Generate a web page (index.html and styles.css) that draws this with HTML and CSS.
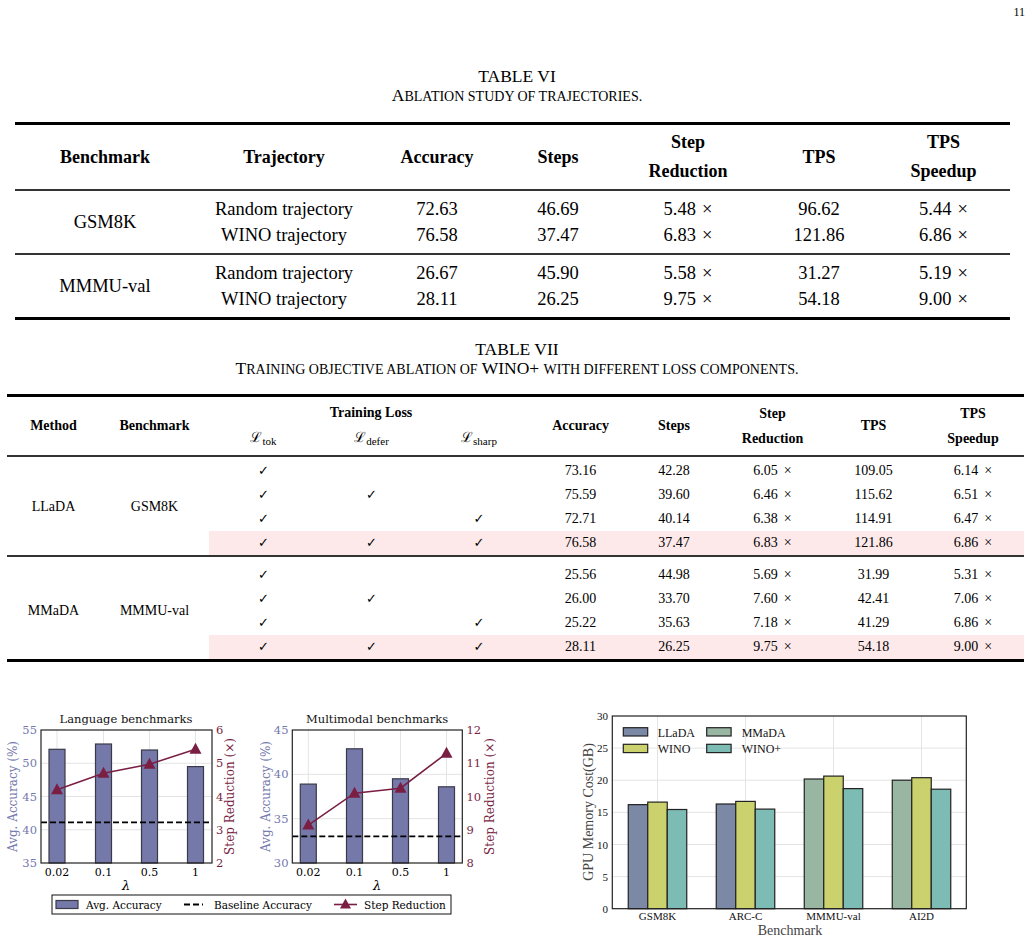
FILE: index.html
```html
<!DOCTYPE html>
<html lang="en">
<head>
<meta charset="utf-8"/>
<title>Ablation tables and figures</title>
<link rel="stylesheet" href="styles.css">
</head>
<body>
<div class="page-num">11</div>

<div class="caption cap6">
  <div class="cap-title">TABLE VI</div>
  <div class="cap-sub">A<span class="sc">BLATION STUDY OF TRAJECTORIES.</span></div>
</div>
<table class="t6">
  <colgroup>
    <col style="width:180px"><col style="width:178px"><col style="width:128px"><col style="width:114px"><col style="width:146px"><col style="width:116px"><col style="width:133px">
  </colgroup>
  <thead>
    <tr>
      <th>Benchmark</th><th>Trajectory</th><th>Accuracy</th><th>Steps</th><th>Step<br>Reduction</th><th>TPS</th><th>TPS<br>Speedup</th>
    </tr>
  </thead>
  <tbody class="grp">
    <tr class="first"><td rowspan="2">GSM8K</td><td>Random trajectory</td><td>72.63</td><td>46.69</td><td>5.48<span class="x">×</span></td><td>96.62</td><td>5.44<span class="x">×</span></td></tr>
    <tr class="last"><td>WINO trajectory</td><td>76.58</td><td>37.47</td><td>6.83<span class="x">×</span></td><td>121.86</td><td>6.86<span class="x">×</span></td></tr>
  </tbody>
  <tbody class="grp">
    <tr class="first"><td rowspan="2">MMMU-val</td><td>Random trajectory</td><td>26.67</td><td>45.90</td><td>5.58<span class="x">×</span></td><td>31.27</td><td>5.19<span class="x">×</span></td></tr>
    <tr class="last"><td>WINO trajectory</td><td>28.11</td><td>26.25</td><td>9.75<span class="x">×</span></td><td>54.18</td><td>9.00<span class="x">×</span></td></tr>
  </tbody>
</table>

<div class="caption cap7">
  <div class="cap-title">TABLE VII</div>
  <div class="cap-sub">T<span class="sc">RAINING OBJECTIVE ABLATION OF</span> WINO+ <span class="sc">WITH DIFFERENT LOSS COMPONENTS.</span></div>
</div>
<table class="t7">
  <colgroup>
    <col style="width:93px"><col style="width:109px"><col style="width:109px"><col style="width:107px"><col style="width:108px"><col style="width:95px"><col style="width:92px"><col style="width:105px"><col style="width:97px"><col style="width:102px">
  </colgroup>
  <thead>
    <tr class="h1">
      <th rowspan="2">Method</th><th rowspan="2">Benchmark</th><th colspan="3">Training Loss</th><th rowspan="2">Accuracy</th><th rowspan="2">Steps</th><th rowspan="2">Step<br>Reduction</th><th rowspan="2">TPS</th><th rowspan="2">TPS<br>Speedup</th>
    </tr>
    <tr class="h2">
      <th class="loss">ℒ<sub>tok</sub></th><th class="loss">ℒ<sub>defer</sub></th><th class="loss">ℒ<sub>sharp</sub></th>
    </tr>
  </thead>
  <tbody class="grp g1">
    <tr class="first"><td rowspan="4">LLaDA</td><td rowspan="4">GSM8K</td><td class="ck">✓</td><td></td><td></td><td>73.16</td><td>42.28</td><td>6.05<span class="x">×</span></td><td>109.05</td><td>6.14<span class="x">×</span></td></tr>
    <tr><td class="ck">✓</td><td class="ck">✓</td><td></td><td>75.59</td><td>39.60</td><td>6.46<span class="x">×</span></td><td>115.62</td><td>6.51<span class="x">×</span></td></tr>
    <tr><td class="ck">✓</td><td></td><td class="ck">✓</td><td>72.71</td><td>40.14</td><td>6.38<span class="x">×</span></td><td>114.91</td><td>6.47<span class="x">×</span></td></tr>
    <tr class="hl"><td class="ck">✓</td><td class="ck">✓</td><td class="ck">✓</td><td>76.58</td><td>37.47</td><td>6.83<span class="x">×</span></td><td>121.86</td><td>6.86<span class="x">×</span></td></tr>
  </tbody>
  <tbody class="grp g2">
    <tr class="first"><td rowspan="4">MMaDA</td><td rowspan="4">MMMU-val</td><td class="ck">✓</td><td></td><td></td><td>25.56</td><td>44.98</td><td>5.69<span class="x">×</span></td><td>31.99</td><td>5.31<span class="x">×</span></td></tr>
    <tr><td class="ck">✓</td><td class="ck">✓</td><td></td><td>26.00</td><td>33.70</td><td>7.60<span class="x">×</span></td><td>42.41</td><td>7.06<span class="x">×</span></td></tr>
    <tr><td class="ck">✓</td><td></td><td class="ck">✓</td><td>25.22</td><td>35.63</td><td>7.18<span class="x">×</span></td><td>41.29</td><td>6.86<span class="x">×</span></td></tr>
    <tr class="hl"><td class="ck">✓</td><td class="ck">✓</td><td class="ck">✓</td><td>28.11</td><td>26.25</td><td>9.75<span class="x">×</span></td><td>54.18</td><td>9.00<span class="x">×</span></td></tr>
  </tbody>
</table>

<div class="figures">
  <svg class="fig-left" width="500" height="230" viewBox="0 0 500 230">
    <!-- language benchmarks -->
    <text class="ttl" x="126" y="24" text-anchor="middle">Language benchmarks</text>
    <g class="grid">
      <line x1="41" y1="64.25" x2="212" y2="64.25"/><line x1="41" y1="97.5" x2="212" y2="97.5"/><line x1="41" y1="130.75" x2="212" y2="130.75"/>
      <line x1="57" y1="31" x2="57" y2="164"/><line x1="103.5" y1="31" x2="103.5" y2="164"/><line x1="149.5" y1="31" x2="149.5" y2="164"/><line x1="195.5" y1="31" x2="195.5" y2="164"/>
    </g>
    <g class="bar">
      <rect x="49" y="50.3" width="16" height="113.7"/>
      <rect x="95.5" y="45" width="16" height="119"/>
      <rect x="141.5" y="51" width="16" height="113"/>
      <rect x="187.5" y="67.6" width="16" height="96.4"/>
    </g>
    <line class="base" x1="41" y1="123.4" x2="212" y2="123.4"/>
    <polyline class="step" points="57,90.85 103.5,74.2 149.5,65.2 195.5,50.2"/>
    <g class="tri">
      <polygon points="57,84.35 51,95.35 63,95.35"/>
      <polygon points="103.5,67.7 97.5,78.7 109.5,78.7"/>
      <polygon points="149.5,58.7 143.5,69.7 155.5,69.7"/>
      <polygon points="195.5,43.7 189.5,54.7 201.5,54.7"/>
    </g>
    <rect class="frame" x="41" y="31" width="171" height="133"/>
    <g class="yl-tick" text-anchor="end">
      <text x="37" y="35">55</text><text x="37" y="68.25">50</text><text x="37" y="101.5">45</text><text x="37" y="134.75">40</text><text x="37" y="168">35</text>
    </g>
    <g class="yr-tick">
      <text x="216" y="35">6</text><text x="216" y="68.25">5</text><text x="216" y="101.5">4</text><text x="216" y="134.75">3</text><text x="216" y="168">2</text>
    </g>
    <g class="x-tick" text-anchor="middle">
      <text x="57" y="177">0.02</text><text x="103.5" y="177">0.1</text><text x="149.5" y="177">0.5</text><text x="195.5" y="177">1</text>
    </g>
    <text class="lam" x="126" y="191" text-anchor="middle">λ</text>
    <text class="yl-lab" transform="translate(17,97.5) rotate(-90)" text-anchor="middle">Avg. Accuracy (%)</text>
    <text class="yr-lab" transform="translate(234,97.5) rotate(-90)" text-anchor="middle">Step Reduction (×)</text>

    <!-- multimodal benchmarks -->
    <text class="ttl" x="377" y="24" text-anchor="middle">Multimodal benchmarks</text>
    <g class="grid">
      <line x1="292.3" y1="75.33" x2="462.3" y2="75.33"/><line x1="292.3" y1="119.67" x2="462.3" y2="119.67"/>
      <line x1="308.3" y1="31" x2="308.3" y2="164"/><line x1="354.5" y1="31" x2="354.5" y2="164"/><line x1="400.5" y1="31" x2="400.5" y2="164"/><line x1="446.5" y1="31" x2="446.5" y2="164"/>
    </g>
    <g class="bar">
      <rect x="300.3" y="85.1" width="16" height="78.9"/>
      <rect x="346.5" y="49.8" width="16" height="114.2"/>
      <rect x="392.5" y="79.8" width="16" height="84.2"/>
      <rect x="438.5" y="87.8" width="16" height="76.2"/>
    </g>
    <line class="base" x1="292.3" y1="137.4" x2="462.3" y2="137.4"/>
    <polyline class="step" points="308.3,126.1 354.5,94.2 400.5,89.2 446.5,54.3"/>
    <g class="tri">
      <polygon points="308.3,119.6 302.3,130.6 314.3,130.6"/>
      <polygon points="354.5,87.7 348.5,98.7 360.5,98.7"/>
      <polygon points="400.5,82.7 394.5,93.7 406.5,93.7"/>
      <polygon points="446.5,47.8 440.5,58.8 452.5,58.8"/>
    </g>
    <rect class="frame" x="292.3" y="31" width="170" height="133"/>
    <g class="yl-tick" text-anchor="end">
      <text x="288.5" y="35">45</text><text x="288.5" y="79.33">40</text><text x="288.5" y="123.67">35</text><text x="288.5" y="168">30</text>
    </g>
    <g class="yr-tick">
      <text x="466.5" y="35">12</text><text x="466.5" y="68.25">11</text><text x="466.5" y="101.5">10</text><text x="466.5" y="134.75">9</text><text x="466.5" y="168">8</text>
    </g>
    <g class="x-tick" text-anchor="middle">
      <text x="308.3" y="177">0.02</text><text x="354.5" y="177">0.1</text><text x="400.5" y="177">0.5</text><text x="446.5" y="177">1</text>
    </g>
    <text class="lam" x="377" y="191" text-anchor="middle">λ</text>
    <text class="yl-lab" transform="translate(270,97.5) rotate(-90)" text-anchor="middle">Avg. Accuracy (%)</text>
    <text class="yr-lab" transform="translate(494,97.5) rotate(-90)" text-anchor="middle">Step Reduction (×)</text>

    <!-- shared legend -->
    <rect class="leg-box" x="52" y="196" width="399" height="19"/>
    <rect class="bar" x="56" y="201.5" width="22" height="8"/>
    <text class="leg" x="86" y="209.5">Avg. Accuracy</text>
    <line class="base" x1="184" y1="205.5" x2="203" y2="205.5"/>
    <text class="leg" x="214" y="209.5">Baseline Accuracy</text>
    <line class="step" x1="334" y1="205.5" x2="357" y2="205.5"/>
    <polygon class="tri" points="345.5,199.5 340,209.5 351,209.5"/>
    <text class="leg" x="364" y="209.5">Step Reduction</text>
  </svg>

  <svg class="fig-right" width="430" height="240" viewBox="0 -2 430 240">
    <g class="grid">
      <line x1="52.3" y1="47.1" x2="406.3" y2="47.1"/><line x1="52.3" y1="79.2" x2="406.3" y2="79.2"/><line x1="52.3" y1="111.35" x2="406.3" y2="111.35"/><line x1="52.3" y1="143.5" x2="406.3" y2="143.5"/><line x1="52.3" y1="175.6" x2="406.3" y2="175.6"/>
      <line x1="97.5" y1="15" x2="97.5" y2="207.7"/><line x1="185.5" y1="15" x2="185.5" y2="207.7"/><line x1="273.5" y1="15" x2="273.5" y2="207.7"/><line x1="361.5" y1="15" x2="361.5" y2="207.7"/>
    </g>
    <g class="mbar">
      <rect class="llada" x="68.25" y="103.65" width="19.5" height="104.05"/>
      <rect class="wino" x="87.75" y="101.1" width="19.5" height="106.6"/>
      <rect class="winop" x="107.25" y="108.5" width="19.5" height="99.2"/>
      <rect class="llada" x="156.25" y="103" width="19.5" height="104.7"/>
      <rect class="wino" x="175.75" y="100.4" width="19.5" height="107.3"/>
      <rect class="winop" x="195.25" y="108.1" width="19.5" height="99.6"/>
      <rect class="mmada" x="244.25" y="78" width="19.5" height="129.7"/>
      <rect class="wino" x="263.75" y="75.1" width="19.5" height="132.6"/>
      <rect class="winop" x="283.25" y="87.6" width="19.5" height="120.1"/>
      <rect class="mmada" x="332.25" y="79.2" width="19.5" height="128.5"/>
      <rect class="wino" x="351.75" y="76.7" width="19.5" height="131"/>
      <rect class="winop" x="371.25" y="88.2" width="19.5" height="119.5"/>
    </g>
    <rect class="frame" x="52.3" y="15" width="354" height="192.7"/>
    <g class="mtick" text-anchor="end">
      <text x="48" y="19">30</text><text x="48" y="51.1">25</text><text x="48" y="83.2">20</text><text x="48" y="115.35">15</text><text x="48" y="147.5">10</text><text x="48" y="179.6">5</text><text x="48" y="211.7">0</text>
    </g>
    <g class="mtick" text-anchor="middle">
      <text x="97.5" y="219">GSM8K</text><text x="185.5" y="219">ARC-C</text><text x="273.5" y="219">MMMU-val</text><text x="361.5" y="219">AI2D</text>
    </g>
    <text class="mlab" x="230" y="234" text-anchor="middle">Benchmark</text>
    <text class="mlab" transform="translate(33,111) rotate(-90)" text-anchor="middle">GPU Memory Cost(GB)</text>
    <g class="mbar">
      <rect class="llada" x="63.3" y="26.7" width="24.4" height="8.3"/>
      <rect class="mmada" x="146.7" y="26.7" width="24.4" height="8.3"/>
      <rect class="wino" x="63.3" y="43.3" width="24.4" height="8.3"/>
      <rect class="winop" x="146.7" y="43.3" width="24.4" height="8.3"/>
    </g>
    <g class="mleg">
      <text x="97.7" y="35.5">LLaDA</text><text x="181.7" y="35.5">MMaDA</text>
      <text x="97.7" y="52">WINO</text><text x="181.7" y="52">WINO+</text>
    </g>
  </svg>
</div>
</body>
</html>
```

FILE: styles.css
```css
body {
  margin: 0;
  background: #fff;
  color: #000;
  font-family: "Liberation Serif", "Times New Roman", serif;
  width: 1034px;
  height: 940px;
  overflow: hidden;
}

.page-num {
  text-align: right;
  padding: 5px 9px 0 0;
  font-size: 12px;
  line-height: 14px;
}

.caption {
  text-align: center;
  font-size: 17.5px;
  line-height: 19px;
}
.cap-sub .sc {
  font-size: 14px;
}
.cap6 {
  margin-top: 48px;
  margin-bottom: 16px;
}
.cap7 {
  margin-top: 20px;
  margin-bottom: 15px;
}

table {
  border-collapse: collapse;
  table-layout: fixed;
}
th, td {
  padding: 0;
  text-align: center;
  vertical-align: middle;
}
.x {
  margin-left: 6px;
}

/* table VI */
.t6 {
  margin-left: 15px;
  width: 995px;
  font-size: 18.5px;
  border-top: 3px solid #000;
  border-bottom: 3px solid #000;
}
.t6 th {
  font-size: 18px;
  height: 64px;
  line-height: 29px;
}
.t6 td {
  line-height: 26px;
}
.t6 .grp {
  border-top: 2px solid #333;
}
.t6 .first td {
  padding-top: 5px;
}
.t6 .last td {
  padding-bottom: 5px;
}
.t6 td[rowspan] {
  padding: 0;
}

/* table VII */
.t7 {
  margin-left: 7px;
  width: 1017px;
  font-size: 14px;
  border-top: 3px solid #000;
  border-bottom: 3px solid #000;
}
.t7 th {
  font-size: 14px;
  line-height: 25px;
}
.t7 .h1 {
  height: 32px;
}
.t7 .h2 {
  height: 28px;
}
.t7 .loss {
  font-weight: normal;
  font-family: "DejaVu Serif", serif;
  font-size: 14px;
  vertical-align: top;
  line-height: 18px;
}
.t7 .loss sub {
  font-family: "Liberation Serif", serif;
  font-size: 11px;
  vertical-align: -3px;
  line-height: 0;
}
.t7 td {
  line-height: 24px;
}
.t7 .grp {
  border-top: 2px solid #333;
}
.t7 .g1 .first td {
  padding-top: 2px;
}
.t7 .g2 .first td {
  padding-top: 6px;
}
.t7 td[rowspan] {
  padding: 0;
}
.t7 .hl td {
  background: #fde9ea;
}
.t7 .ck {
  font-family: "DejaVu Sans", sans-serif;
  font-size: 13px;
}

/* figures */
.figures {
  display: flex;
  margin-top: 37px;
}
.fig-left {
  display: block;
}
.fig-right {
  display: block;
  margin-left: 60px;
}

.fig-left text {
  font-family: "DejaVu Serif", serif;
  font-size: 11px;
}
.fig-left .ttl {
  font-size: 11.5px;
  fill: #111;
}
.fig-left .yl-tick text {
  fill: #7378ad;
  font-size: 11.5px;
}
.fig-left .yr-tick text {
  fill: #7a1f43;
  font-size: 11.5px;
}
.fig-left .yl-lab {
  fill: #7378ad;
  font-size: 12px;
}
.fig-left .yr-lab {
  fill: #7a1f43;
  font-size: 12px;
}
.fig-left .lam {
  font-style: italic;
  font-size: 13px;
}
.fig-left .leg {
  font-size: 10.5px;
}

.grid line {
  stroke: #e4e4e4;
  stroke-width: 1;
}
.bar rect, rect.bar {
  fill: #7479aa;
  stroke: #3a3a48;
  stroke-width: 1.2;
}
.base {
  stroke: #000;
  stroke-width: 1.8;
  stroke-dasharray: 6 3;
}
.step {
  fill: none;
  stroke: #7a1f43;
  stroke-width: 1.6;
}
.tri polygon, polygon.tri {
  fill: #7a1f43;
}
.frame {
  fill: none;
  stroke: #222;
  stroke-width: 1.2;
}
.leg-box {
  fill: #fff;
  stroke: #111;
  stroke-width: 1;
}

.fig-right text {
  font-family: "Liberation Serif", "Times New Roman", serif;
}
.mtick text {
  font-size: 11px;
  fill: #111;
}
.mlab {
  font-size: 14px;
  fill: #444;
}
.mleg text {
  font-size: 12px;
  fill: #111;
}
.mbar rect {
  stroke: #222;
  stroke-width: 1.2;
}
.mbar .llada {
  fill: #7b89a6;
}
.mbar .wino {
  fill: #cbd16c;
}
.mbar .mmada {
  fill: #98b6a1;
}
.mbar .winop {
  fill: #7dbcb5;
}
```
